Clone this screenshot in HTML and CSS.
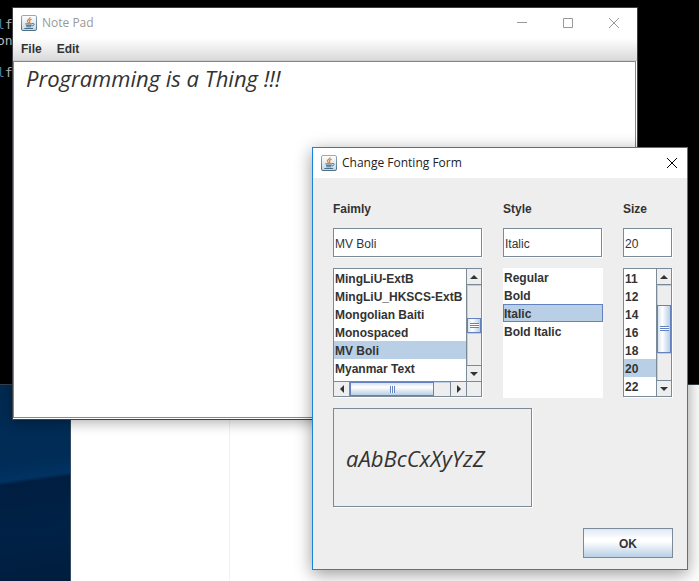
FILE: index.html
```html
<!DOCTYPE html>
<html lang="en">
<head>
<meta charset="utf-8">
<title>Note Pad</title>
<link rel="stylesheet" href="styles.css">
</head>
<body>
<svg class="defs" width="0" height="0" aria-hidden="true">
  <defs>
    <linearGradient id="tile" x1="0" y1="0" x2="0" y2="1">
      <stop offset="0" stop-color="#ffffff"/>
      <stop offset="1" stop-color="#c6d6e2"/>
    </linearGradient>
    <linearGradient id="edge" x1="0" y1="0" x2="0" y2="1">
      <stop offset="0" stop-color="#92aabc"/>
      <stop offset="1" stop-color="#526e84"/>
    </linearGradient>
    <symbol id="java" viewBox="0 0 16 16">
      <rect x=".5" y=".5" width="15" height="15" rx="1.5" fill="url(#tile)" stroke="url(#edge)"/>
      <path d="M9.2 2.2C9.4 4 5.9 4.500 6.400 6.200c.2.700.9 1.100 1.100 1.800M10.700 4.200C8.700 4.900 8 5.600 8.600 6.400c.4.600.5 1-.3 1.800" fill="none" stroke="#e8812a" stroke-width="1.200"/>
      <path d="M4.300 8.900h6.800M5 10.400h5.600M5.300 11.800h5M3.300 13.500h8.800M11 8.700c3-.9 2.700 1.700.1 2.300" fill="none" stroke="#44708c" stroke-width="1"/>
    </symbol>
  </defs>
</svg>
<div class="desktop">
  <div class="console">
    <p><b>l</b>f</p><p>on</p><p>&nbsp;</p><p><b>l</b>f</p>
  </div>
  <div class="lower">
    <div class="wallpaper"></div>
    <div class="page"><div class="page-side"></div></div>
  </div>

  <section class="window notepad" aria-label="Note Pad">
    <header class="titlebar">
      <svg class="app-icon" aria-hidden="true"><use href="#java"/></svg>
      <h1>Note Pad</h1>
      <button class="caption" aria-label="Minimize"><svg viewBox="0 0 10 10"><path d="M0 4.500h10"/></svg></button>
      <button class="caption" aria-label="Maximize"><svg viewBox="0 0 10 10"><path d="M.5.5h9v9h-9z"/></svg></button>
      <button class="caption" aria-label="Close"><svg viewBox="0 0 10 10"><path d="M0 0l10 10M10 0L0 10"/></svg></button>
    </header>
    <nav class="menubar"><button>File</button><button>Edit</button></nav>
    <textarea class="editor" aria-label="Document" spellcheck="false">Programming is a Thing !!!</textarea>
  </section>

  <section class="window dialog" aria-label="Change Fonting Form">
    <header class="titlebar">
      <svg class="app-icon" aria-hidden="true"><use href="#java"/></svg>
      <h1>Change Fonting Form</h1>
      <button class="caption" aria-label="Close"><svg viewBox="0 0 10 10"><path d="M0 0l10 10M10 0L0 10"/></svg></button>
    </header>
    <form class="form">
      <div class="columns">
        <div class="column">
          <label for="family">Faimly</label>
          <input id="family" type="text" value="MV Boli">
          <div class="pane family-pane">
            <select size="6" aria-label="Family list">
              <option>MingLiU-ExtB</option>
              <option>MingLiU_HKSCS-ExtB</option>
              <option>Mongolian Baiti</option>
              <option>Monospaced</option>
              <option selected>MV Boli</option>
              <option>Myanmar Text</option>
            </select>
            <div class="vbar">
              <span class="arrow up"></span>
              <span class="track before"></span>
              <span class="thumb"></span>
              <span class="track after"></span>
              <span class="arrow down"></span>
            </div>
            <div class="hbar">
              <span class="arrow left"></span>
              <span class="thumb"></span>
              <span class="track"></span>
              <span class="arrow right"></span>
            </div>
            <div class="corner"></div>
          </div>
        </div>
        <div class="column">
          <label for="style">Style</label>
          <input id="style" type="text" value="Italic">
          <select class="style-list" size="4" aria-label="Style list">
            <option>Regular</option>
            <option>Bold</option>
            <option selected>Italic</option>
            <option>Bold Italic</option>
          </select>
        </div>
        <div class="column">
          <label for="size">Size</label>
          <input id="size" type="text" value="20">
          <div class="pane size-pane">
            <select size="7" aria-label="Size list">
              <option>11</option>
              <option>12</option>
              <option>14</option>
              <option>16</option>
              <option>18</option>
              <option selected>20</option>
              <option>22</option>
            </select>
            <div class="vbar">
              <span class="arrow up"></span>
              <span class="track before"></span>
              <span class="thumb"></span>
              <span class="track after"></span>
              <span class="arrow down"></span>
            </div>
          </div>
        </div>
      </div>
      <output class="preview">aAbBcCxXyYzZ</output>
      <button class="ok" type="button">OK</button>
    </form>
  </section>
</div>
</body>
</html>
```
FILE: styles.css
```css
* { box-sizing: border-box; }

:root {
  --line: #7a8a99;
  --face: #eeeeee;
  --select: #b8cfe5;
  --accent: #6382bf;
  --ink: #333333;
}

body {
  margin: 0;
  font: bold 12px/18px "Liberation Sans", Arial, sans-serif;
  color: var(--ink);
}

button, input, select, textarea {
  margin: 0;
  padding: 0;
  border: 0;
  border-radius: 0;
  outline: 0;
  background: none;
  font: inherit;
  color: inherit;
}

.defs { position: absolute; }

/* Desktop */
.desktop {
  position: relative;
  display: grid;
  grid-template-rows: 385px 1fr;
  min-height: 100vh;
  overflow: hidden;
  background: #ffffff;
}

.console {
  padding-top: 17px;
  border-bottom: 1px solid #33414d;
  background: #000000;
  color: #c0c0c0;
  font: 13px/16px "DejaVu Sans Mono", monospace;
}
.console p { margin: 0 0 0 -3px; }
.console b { color: #4a86b8; font-weight: normal; }

.lower { display: flex; }

.wallpaper {
  flex: 0 0 71px;
  border-right: 1px solid #344a5e;
  background:
    linear-gradient(172deg, #001d3d 0, #00244a 45px, #001e40 92px, #003262 98px, #002c56 130px, #002a50 100%);
  background:
    linear-gradient(172deg, #002a50 0, #002d58 80px, #003262 96px, #001e40 100px, #002247 150px, #001d3d 100%);
}

.page { flex: 1; display: flex; }
.page-side { width: 159px; border-right: 1px solid #f2f2f2; }

/* Windows */
.window {
  position: absolute;
  display: flex;
  flex-direction: column;
}

.notepad {
  left: 12px;
  right: 61px;
  top: 7px;
  height: 413px;
  border: 1px solid #3c3f44;
  background: #ffffff;
  box-shadow: 0 3px 12px rgba(0, 0, 0, .3);
}

.dialog {
  right: 11px;
  top: 147px;
  border: 1px solid #1883d7;
  background: var(--face);
  box-shadow: 0 4px 16px rgba(0, 0, 0, .4);
}

.titlebar {
  display: flex;
  align-items: center;
  height: 30px;
  padding-left: 8px;
  background: #ffffff;
}
.titlebar h1 {
  flex: 1;
  margin: 0 0 0 5px;
  font: 12px/18px "Open Sans", "Noto Sans", sans-serif;
  color: #222222;
}
.notepad .titlebar h1 { color: #999999; }
.app-icon { width: 16px; height: 16px; }

.caption {
  display: flex;
  align-items: center;
  justify-content: center;
  width: 46px;
  height: 30px;
}
.caption svg {
  width: 10px;
  height: 10px;
  overflow: visible;
  fill: none;
  stroke: #999999;
}
.dialog .caption { width: 30px; }
.dialog .caption svg { stroke: #000000; }

.menubar {
  display: flex;
  gap: 15px;
  height: 23px;
  padding: 0 8px;
  border-bottom: 1px solid #cccccc;
  background: linear-gradient(#ffffff, #dadada);
}

.editor {
  flex: 1;
  margin: 0 1px 1px 0;
  padding: 4px 12px;
  border: 1px solid var(--line);
  background: #ffffff;
  resize: none;
  font: italic 22px/24px "MV Boli", "Open Sans", "Noto Sans", cursive;
}

/* Font form */
.form {
  display: grid;
  grid-template-columns: 199px 1fr;
  padding: 22px 14px 11px 20px;
  row-gap: 10px;
}

.columns {
  grid-column: 1 / -1;
  display: grid;
  grid-template-columns: 150px 100px 50px;
  column-gap: 20px;
}

.column {
  display: flex;
  flex-direction: column;
}
.column label { margin-bottom: 10px; }
.column input {
  height: 29px;
  margin: 0 1px 11px 0;
  padding: 2px 1px 0;
  border: 1px solid var(--line);
  background: #ffffff;
  box-shadow: 1px 1px 0 #ffffff;
  font-weight: normal;
  min-width: 0;
}

select {
  display: block;
  overflow: hidden;
  background: #ffffff;
  scrollbar-width: none;
}
option {
  height: 18px;
  min-height: 18px;
  padding: 3px 1px 0;
  font-weight: bold;
}
option:checked {
  background: linear-gradient(var(--select), var(--select));
  color: var(--ink);
}

.style-list { height: 130px; }
.style-list option { padding: 2px 0 0; border: 1px solid transparent; }
.style-list option:checked { border-color: var(--accent); }

.pane {
  display: grid;
  height: 129px;
  margin: 0 1px 1px 0;
  border: 1px solid var(--line);
  box-shadow: 1px 1px 0 #ffffff;
}
.family-pane { grid-template: 1fr 15px / 1fr 15px; }
.size-pane { grid-template: 1fr / 1fr 15px; }
.pane select { width: 100%; height: 100%; }

.vbar, .hbar { display: flex; background: var(--face); }
.vbar { flex-direction: column; border-left: 1px solid var(--line); }
.hbar { border-top: 1px solid var(--line); }
.corner { border: solid var(--line); border-width: 1px 0 0 1px; }

.arrow {
  display: flex;
  flex: 0 0 16px;
  align-items: center;
  justify-content: center;
}
.arrow::before { content: ""; border: 4px solid transparent; }
.up { border-bottom: 1px solid var(--line); }
.down { border-top: 1px solid var(--line); }
.left { border-right: 1px solid var(--line); }
.right { border-left: 1px solid var(--line); }
.up::before { border-top: 0; border-bottom-color: var(--ink); }
.down::before { border-bottom: 0; border-top-color: var(--ink); }
.left::before { border-left: 0; border-right-color: var(--ink); }
.right::before { border-right: 0; border-left-color: var(--ink); }

.vbar .track { box-shadow: inset 1px 1px 0 var(--select); }
.hbar .track { flex: 1; box-shadow: inset 0 1px 0 var(--select); }

.thumb {
  display: flex;
  align-items: center;
  justify-content: center;
  border: 1px solid var(--accent);
}
.vbar .thumb { background: linear-gradient(90deg, #d5e3f0, #ffffff 35%, #b8cfe5); }
.hbar .thumb { flex: 0 0 84px; background: linear-gradient(#d5e3f0, #ffffff 35%, #b8cfe5); }
.thumb::before { content: ""; }
.vbar .thumb::before {
  width: 9px;
  height: 5px;
  background: repeating-linear-gradient(var(--accent) 0 1px, #ffffff 1px 2px);
}
.hbar .thumb::before {
  width: 5px;
  height: 7px;
  background: repeating-linear-gradient(90deg, var(--accent) 0 1px, #ffffff 1px 2px);
}

.family-pane .before { flex: 33; }
.family-pane .vbar .thumb { flex: 0 0 15px; }
.family-pane .after { flex: 32; }
.size-pane .before { flex: 20; }
.size-pane .thumb { flex: 0 0 48px; }
.size-pane .after { flex: 28; }

.preview {
  display: flex;
  align-items: center;
  height: 99px;
  padding-left: 12px;
  border: 1px solid var(--line);
  box-shadow: 1px 1px 0 #ffffff;
  font: italic 22px/24px "MV Boli", "Open Sans", "Noto Sans", cursive;
}

.ok {
  grid-column: 1 / -1;
  justify-self: end;
  width: 90px;
  height: 30px;
  margin-top: 11px;
  padding-top: 2px;
  border: 1px solid var(--line);
  background: linear-gradient(#dde8f3, #ffffff 35%, #ffffff 45%, #b8cfe5);
}
```
